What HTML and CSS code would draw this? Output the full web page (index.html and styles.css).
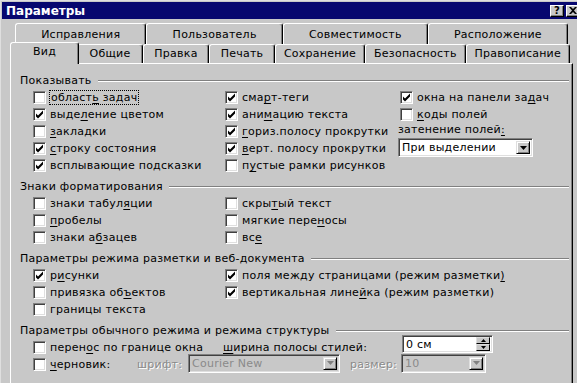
FILE: index.html
```html
<!DOCTYPE html>
<html lang="ru">
<head>
<meta charset="UTF-8">
<title>Параметры</title>
<link rel="stylesheet" href="styles.css">
</head>
<body>

<div class="dialog">
  <div class="titlebar">
    <span class="title">Параметры</span>
    <div class="caption-btns">
      <span class="cbtn">?</span>
      <span class="cbtn">
        <svg width="8" height="7" viewBox="0 0 8 7"><path d="M0 0h2l2 2 2-2h2L5 3.5 8 7H6L4 5 2 7H0l3-3.5z" fill="#000"/></svg>
      </span>
    </div>
  </div>

  <div class="body">
    <div class="tabrow back">
      <div class="tab">Исправления</div>
      <div class="tab">Пользователь</div>
      <div class="tab">Совместимость</div>
      <div class="tab">Расположение</div>
    </div>
    <div class="tabrow front">
      <div class="tab short selected">Вид</div>
      <div class="tab short">Общие</div>
      <div class="tab short">Правка</div>
      <div class="tab short">Печать</div>
      <div class="tab">Сохранение</div>
      <div class="tab">Безопасность</div>
      <div class="tab">Правописание</div>
    </div>

    <div class="panel">

      <div class="group">
        <div class="group-title"><span>Показывать</span><i></i></div>
        <div class="grid">
          <label class="chk"><span class="box"></span><span class="focus">област<u>ь</u> задач</span></label>
          <label class="chk"><span class="box on"></span><span>сма<u>р</u>т-теги</span></label>
          <label class="chk"><span class="box on"></span><span>окна на панели за<u>д</u>ач</span></label>

          <label class="chk"><span class="box on"></span><span>выде<u>л</u>ение цветом</span></label>
          <label class="chk"><span class="box on"></span><span>ани<u>м</u>ацию текста</span></label>
          <label class="chk"><span class="box"></span><span><u>к</u>оды полей</span></label>

          <label class="chk"><span class="box"></span><span><u>з</u>акладки</span></label>
          <label class="chk"><span class="box on"></span><span><u>г</u>ориз.полосу прокрутки</span></label>
          <div class="shade">
            <span>затенение полей<u>:</u></span>
            <div class="combo">
              <span class="combo-text">При выделении</span>
              <span class="drop"><svg width="7" height="4" viewBox="0 0 7 4"><path d="M0 0h7L3.5 4z" fill="#000"/></svg></span>
            </div>
          </div>

          <label class="chk"><span class="box on"></span><span><u>с</u>троку состояния</span></label>
          <label class="chk"><span class="box on"></span><span><u>в</u>ерт. полосу прокрутки</span></label>

          <label class="chk col1"><span class="box on"></span><span>всплывающие подсказки</span></label>
          <label class="chk"><span class="box"></span><span>п<u>у</u>стые рамки рисунков</span></label>
        </div>
      </div>

      <div class="group">
        <div class="group-title"><span>Знаки форматирования</span><i></i></div>
        <div class="grid">
          <label class="chk"><span class="box"></span><span>знаки табул<u>я</u>ции</span></label>
          <label class="chk wide"><span class="box"></span><span>скры<u>т</u>ый текст</span></label>
          <label class="chk"><span class="box"></span><span><u>п</u>робелы</span></label>
          <label class="chk wide"><span class="box"></span><span>мягкие пере<u>н</u>осы</span></label>
          <label class="chk"><span class="box"></span><span>знаки а<u>б</u>зацев</span></label>
          <label class="chk wide"><span class="box"></span><span>вс<u>е</u></span></label>
        </div>
      </div>

      <div class="group">
        <div class="group-title"><span>Параметры режима разметки и веб-документа</span><i></i></div>
        <div class="grid">
          <label class="chk"><span class="box on"></span><span>р<u>и</u>сунки</span></label>
          <label class="chk wide"><span class="box on"></span><span>поля между страницами (режим разметки<u>)</u></span></label>
          <label class="chk"><span class="box"></span><span>привязка об<u>ъ</u>ектов</span></label>
          <label class="chk wide"><span class="box on"></span><span>вертикальная лине<u>й</u>ка (режим разметки)</span></label>
          <label class="chk"><span class="box"></span><span>границы текста</span></label>
        </div>
      </div>

      <div class="group">
        <div class="group-title"><span>Параметры обычного режима и режима структуры</span><i></i></div>
        <div class="grid">
          <label class="chk"><span class="box"></span><span>перен<u>о</u>с по границе окна</span></label>
          <span class="style-width"><span><u>ш</u>ирина полосы стилей:</span></span>
          <div class="spin">
            <span class="combo-text">0 см</span>
            <span class="spin-btns">
              <span class="sbtn"><svg width="5" height="3" viewBox="0 0 5 3"><path d="M2.5 0L5 3H0z" fill="#000"/></svg></span>
              <span class="sbtn"><svg width="5" height="3" viewBox="0 0 5 3"><path d="M0 0h5L2.5 3z" fill="#000"/></svg></span>
            </span>
          </div>
        </div>
        <div class="draft-row">
          <label class="chk draft"><span class="box"></span><span><u>ч</u>ерновик:</span></label>
          <span class="disabled font-label">шрифт:</span>
          <div class="combo off font-combo">
            <span class="combo-text">Courier New</span>
            <span class="drop"><svg width="7" height="4" viewBox="0 0 7 4"><path d="M0 0h7L3.5 4z" fill="#808080"/></svg></span>
          </div>
          <span class="disabled size-label">размер:</span>
          <div class="combo off size-combo">
            <span class="combo-text">10</span>
            <span class="drop"><svg width="7" height="4" viewBox="0 0 7 4"><path d="M0 0h7L3.5 4z" fill="#808080"/></svg></span>
          </div>
        </div>
      </div>

    </div>
  </div>
</div>

</body>
</html>
```

FILE: styles.css
```css
body { margin: 0; background: #c8c8c8; font-family: "DejaVu Sans", Verdana, sans-serif; font-size: 11px; letter-spacing: 0.25px; color: #000; overflow: hidden; }
u { text-decoration: underline; text-underline-offset: 2px; }

.dialog { width: 583px; height: 400px; box-sizing: border-box; padding: 1px; border: 1px solid; border-color: #dfdfdf #000 #000 #dfdfdf; background: #c8c8c8; }

.titlebar { height: 17px; background: #07076f; display: flex; align-items: center; justify-content: space-between; padding-left: 4px; }
.title { color: #fff; font-weight: bold; font-size: 12px; letter-spacing: 0; }
.caption-btns { display: flex; gap: 2px; margin-right: 1px; }
.cbtn { width: 14px; height: 12px; box-sizing: border-box; background: #c8c8c8; border: 1px solid; border-color: #fff #000 #000 #fff; box-shadow: inset -1px -1px #808080; display: flex; align-items: center; justify-content: center; font-weight: bold; font-size: 10px; line-height: 1; }

.body { padding: 4px 8px 0 8px; }

.tabrow { display: flex; }
.tabrow.back { height: 21px; padding: 0 5px 0 5px; }
.tabrow.front { height: 19px; padding: 0 3px 0 2px; }
.tab { flex: 1 1 auto; box-sizing: border-box; border: 1px solid; border-bottom: none; border-color: #fff #000 transparent #fff; border-radius: 3px 3px 0 0; box-shadow: inset -1px 0 #808080; text-align: center; line-height: 20px; background: #c8c8c8; white-space: nowrap; }
.tabrow.back .tab { line-height: 22px; }
.tabrow.front .tab { line-height: 18px; }
.tab.short { flex: 0 0 66px; }
.tab.selected { position: relative; z-index: 1; margin: -2px -2px 0 -2px; height: 22px; flex-basis: 69px; }

.panel { height: 330px; border: 1px solid; border-bottom: none; border-color: #fff #000 transparent #fff; box-shadow: inset -1px 0 #808080; padding: 8px 0 0 9px; }

.group { margin-bottom: 4px; }
.group-title { display: flex; align-items: center; height: 17px; }
.group-title i { flex: 1; margin: 0 3px 0 6px; border-top: 1px solid #808080; border-bottom: 1px solid #fff; }

.grid { display: grid; grid-template-columns: 192px 175px 1fr; grid-auto-rows: 17px; padding-left: 13px; }
.chk { display: flex; align-items: center; gap: 4px; white-space: nowrap; }
.chk.wide { grid-column: span 2; }
.col1 { grid-column: 1; }
.box { width: 13px; height: 13px; flex: none; box-sizing: border-box; background: #fff; border: 1px solid; border-color: #808080 #fff #fff #808080; box-shadow: inset 1px 1px #404040, inset -1px -1px #dfdfdf; }
.box.on { background: #fff url("data:image/svg+xml,%3Csvg xmlns='http://www.w3.org/2000/svg' width='11' height='11' viewBox='0 0 11 11'%3E%3Cpath d='M2 4.5l2 2 5-5v3l-5 5-2-2z' fill='%23000'/%3E%3C/svg%3E") no-repeat 0 0; }
.focus { outline: 1px dotted #000; padding: 0 1px; line-height: 13px; }

.shade { grid-row: span 3; display: flex; flex-direction: column; line-height: 14px; margin-left: -2px; }

.combo, .spin { box-sizing: border-box; height: 19px; background: #fff; border: 1px solid; border-color: #808080 #fff #fff #808080; box-shadow: inset 1px 1px #404040, inset -1px -1px #dfdfdf; display: flex; align-items: center; padding: 2px; }
.combo-text { flex: 1; padding-left: 1px; white-space: nowrap; }
.drop { width: 14px; height: 13px; box-sizing: border-box; background: #c8c8c8; border: 1px solid; border-color: #dfdfdf #000 #000 #dfdfdf; box-shadow: inset 1px 1px #fff, inset -1px -1px #808080; display: flex; align-items: center; justify-content: center; }
.shade .combo { width: 135px; margin-top: 1px; }

.style-width { display: flex; align-items: center; margin-left: -2px; white-space: nowrap; }
.spin { width: 91px; height: 18px; margin: -4px 0 0 2px; }
.spin-btns { display: flex; flex-direction: column; width: 14px; height: 14px; }
.sbtn { flex: 1; box-sizing: border-box; background: #c8c8c8; border: 1px solid; border-color: #dfdfdf #000 #000 #dfdfdf; display: flex; align-items: center; justify-content: center; }

.draft-row { display: flex; align-items: center; height: 17px; padding-left: 13px; }
.chk.draft { width: 104px; }
.disabled { color: #8a8a8a; text-shadow: 1px 1px #fff; white-space: nowrap; }
.font-label { width: 51px; }
.size-label { width: 51px; margin-left: 10px; }
.combo.off { background: #c8c8c8; color: #8a8a8a; margin-top: -3px; }
.font-combo { width: 152px; }
.size-combo { width: 85px; }
```
